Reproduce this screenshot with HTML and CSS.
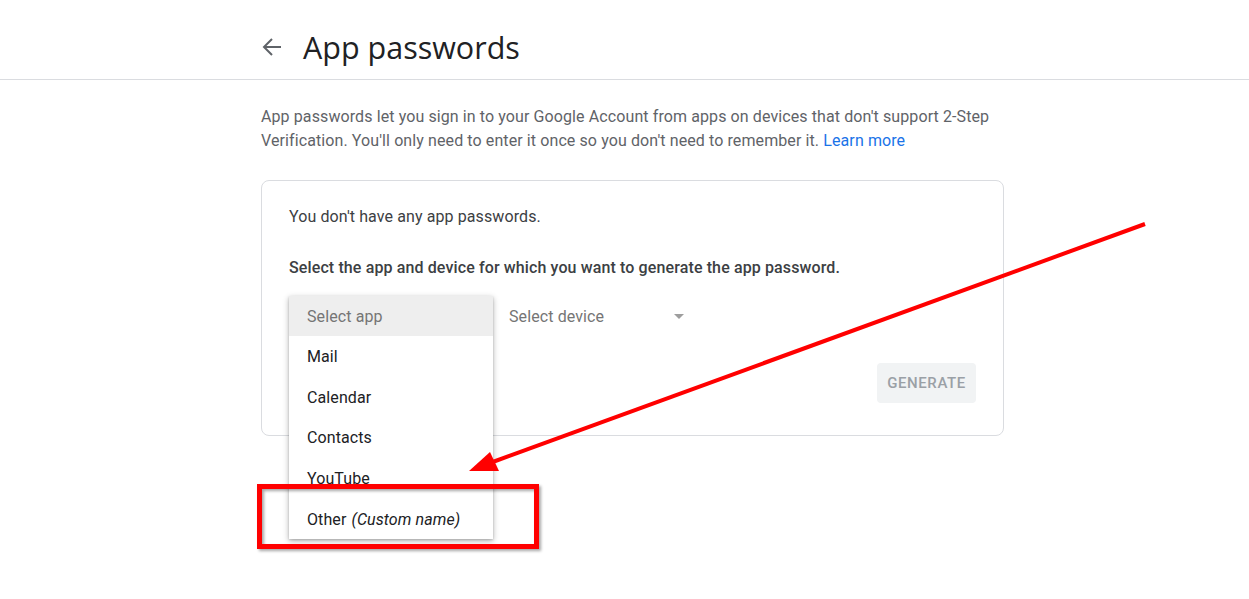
FILE: index.html
```html
<!DOCTYPE html>
<html lang="en">
<head>
<meta charset="utf-8">
<title>App passwords</title>
<link rel="stylesheet" href="styles.css">
</head>
<body>
<header class="topbar">
  <div class="topbar-inner">
    <span class="back">
      <svg width="20" height="20" viewBox="0 0 20 20"><path d="M19 10H2M10 2L2 10l8 8" fill="none" stroke="#5f6368" stroke-width="2"/></svg>
    </span>
    <h1 class="title">App passwords</h1>
  </div>
</header>
<main class="content">
  <p class="intro">App passwords let you sign in to your Google Account from apps on devices that don't support 2-Step Verification. You'll only need to enter it once so you don't need to remember it. <a class="link" href="#">Learn more</a></p>
  <section class="card">
    <p class="empty">You don't have any app passwords.</p>
    <p class="instr">Select the app and device for which you want to generate the app password.</p>
    <div class="selects">
      <div class="select select-app">
        <ul class="menu">
          <li class="item placeholder">Select app</li>
          <li class="item">Mail</li>
          <li class="item">Calendar</li>
          <li class="item">Contacts</li>
          <li class="item">YouTube</li>
          <li class="item">Other <em>(Custom name)</em></li>
        </ul>
      </div>
      <div class="select select-device">
        <span class="select-label">Select device</span>
        <span class="caret"></span>
      </div>
    </div>
    <div class="actions">
      <button class="btn" type="button">GENERATE</button>
    </div>
  </section>
</main>
<svg class="annot" width="1249" height="599" viewBox="0 0 1249 599">
  <defs>
    <filter id="sh" x="-10%" y="-10%" width="130%" height="140%">
      <feDropShadow dx="2" dy="2" stdDeviation="1.5" flood-color="#000" flood-opacity="0.35"/>
    </filter>
  </defs>
  <line x1="1145" y1="224" x2="490" y2="463" stroke="#ff0000" stroke-width="4"/>
  <polygon points="469,471 490,452 499,471" fill="#ff0000"/>
  <rect x="259.5" y="486.5" width="277" height="60" fill="none" stroke="#ff0000" stroke-width="5" filter="url(#sh)"/>
</svg>
</body>
</html>
```
FILE: styles.css
```css
* { box-sizing: border-box; }
html, body { margin: 0; padding: 0; background: #fff; }
body {
  font-family: Roboto, "Noto Sans", Arial, sans-serif;
  color: #202124;
  width: 1249px;
  height: 599px;
  overflow: hidden;
  position: relative;
  letter-spacing: 0.1px;
}
.topbar {
  border-bottom: 1px solid #dadce0;
  padding: 29px 0 14px;
}
.topbar-inner {
  display: flex;
  align-items: center;
  padding-left: 262px;
  height: 36px;
}
.back { width: 20px; height: 20px; display: flex; margin-right: 21px; }
.title {
  margin: 0;
  font-family: "Open Sans", Roboto, sans-serif;
  font-weight: 400;
  font-size: 30.5px;
  line-height: 36px;
  letter-spacing: 0;
  color: #202124;
}
.content {
  margin-left: 261px;
  width: 743px;
}
.intro {
  margin: 25px 0 27px;
  font-size: 16px;
  line-height: 24px;
  color: #5f6368;
}
.link { color: #1a73e8; text-decoration: none; }
.card {
  border: 1px solid #dadce0;
  border-radius: 8px;
  padding: 24px 27px 32px 27px;
}
.empty {
  margin: 0;
  font-size: 16px;
  line-height: 24px;
  color: #3c4043;
}
.instr {
  margin: 27px 0 0;
  font-size: 16px;
  line-height: 24px;
  font-weight: 500;
  letter-spacing: 0.12px;
  color: #3c4043;
}
.selects {
  display: flex;
  margin-top: 16px;
  height: 40px;
}
.select { width: 204px; height: 40px; position: relative; }
.select-device {
  display: flex;
  align-items: center;
  padding-left: 16px;
  padding-right: 12px;
  justify-content: space-between;
}
.select-label { font-size: 16px; color: #757575; }
.caret {
  width: 0; height: 0;
  border-left: 5px solid transparent;
  border-right: 5px solid transparent;
  border-top: 5px solid #9e9e9e;
  margin-right: 1px;
}
.menu {
  position: absolute;
  top: 0; left: 0;
  width: 204px;
  margin: 0; padding: 0;
  list-style: none;
  background: #fff;
  box-shadow: 0 2px 6px rgba(0,0,0,.3), 0 1px 2px rgba(0,0,0,.15);
  z-index: 5;
}
.item {
  height: 40.7px;
  display: flex;
  align-items: center;
  padding-left: 18px;
  font-size: 16px;
  color: #202124;
}
.item em { font-style: italic; margin-left: 5px; }
.item.placeholder { background: #eeeeee; color: #757575; height: 40px; }
.actions {
  display: flex;
  justify-content: flex-end;
  margin-top: 27px;
}
.btn {
  height: 40px;
  width: 99px;
  border: 0;
  border-radius: 4px;
  background: #f1f3f4;
  color: #9aa0a6;
  font-family: Roboto, sans-serif;
  font-weight: 500;
  font-size: 15px;
  letter-spacing: 0.6px;
  padding: 0;
}
.annot {
  position: absolute;
  top: 0; left: 0;
  pointer-events: none;
  z-index: 10;
}
```
